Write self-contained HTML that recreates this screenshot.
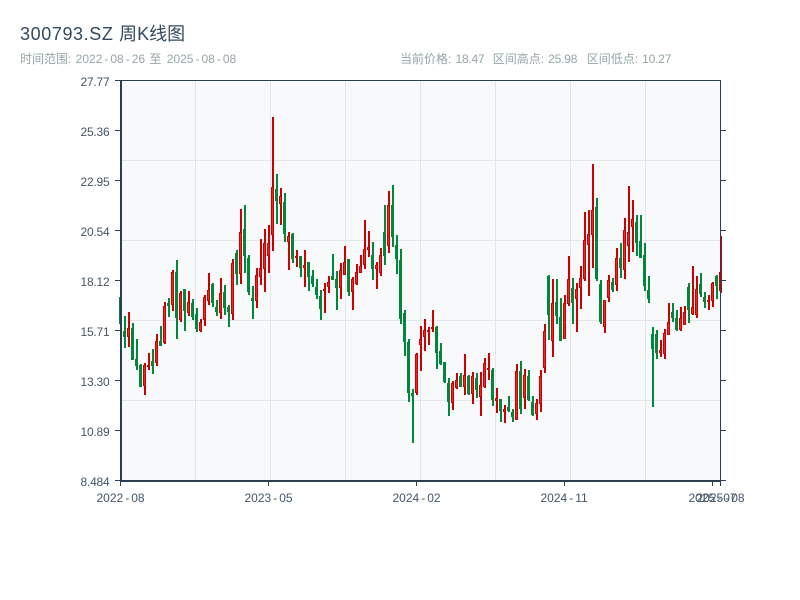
<!DOCTYPE html>
<html><head><meta charset="utf-8"><title>300793.SZ 周K线图</title>
<style>
html,body{margin:0;padding:0;background:#fff;width:800px;height:600px;overflow:hidden}
svg{display:block}
text{font-family:"Liberation Sans","Noto Sans CJK SC",sans-serif}
.y{font-size:12px;fill:#44566a;text-anchor:end;letter-spacing:-.2px}
.x{font-size:12px;fill:#44566a}
.s{font-size:12px;fill:#95a5a6}
</style></head><body>
<svg width="800" height="600" viewBox="0 0 800 600" xmlns="http://www.w3.org/2000/svg">
<rect width="800" height="600" fill="#fff"/>
<text x="20" y="40" font-size="18" fill="#34495e"><tspan letter-spacing=".6">300793.SZ </tspan>周K线图</text>
<text class="s" x="20" y="63">时间范围:<tspan dx="1"> 2022</tspan><tspan dx="2">-</tspan><tspan dx="2">08</tspan><tspan dx="2">-</tspan><tspan dx="2">26</tspan><tspan dx="1"> 至 </tspan><tspan dx="2">2025</tspan><tspan dx="2">-</tspan><tspan dx="2">08</tspan><tspan dx="2">-</tspan><tspan dx="2">08</tspan></text>
<text class="s" x="400" y="63">当前价格:<tspan dx="1" letter-spacing="-.2"> 18.47</tspan></text>
<text class="s" x="492.7" y="63">区间高点:<tspan dx="1" letter-spacing="-.2"> 25.98</tspan></text>
<text class="s" x="586.7" y="63">区间低点:<tspan dx="1" letter-spacing="-.2"> 10.27</tspan></text>
<rect x="121" y="81" width="600" height="400" fill="#f8f9fa"/>
<g shape-rendering="crispEdges">
<path d="M195 81V481M270 81V481M345 81V481M420 81V481M495 81V481M570 81V481M645 81V481M121 160H720M121 240H720M121 320H720M121 400H720" stroke="#e2e5ea" stroke-width="1" fill="none" transform="translate(.5 .5)"/>
<!-- green wicks -->
<path fill="none" stroke="#00873c" stroke-width="2" d="M121 297V324M125 316V348M133 323V360M137 339V370M141 364V387M153 349V374M161 326V346M169 298V317M177 260V339M185 289V331M193 299V320M197 308V332M213 283V307M217 300V316M225 285V315M229 305V327M237 250V285M245 205V273M249 255V295M253 286V319M277 174V224M285 193V242M293 233V263M301 256V277M309 262V291M313 270V287M317 279V299M321 290V320M333 254V280M337 271V310M349 259V296M373 242V280M385 205V265M393 185V247M397 235V274M401 249V324M405 310V356M409 339V402M413 389V443M437 326V369M441 343V365M445 362V383M449 378V416M461 373V387M469 375V395M477 373V398M493 368V406M501 399V422M509 396V412M513 409V422M521 361V414M529 370V401M533 396V416M549 275V340M557 279V324M561 298V341M573 278V324M597 198V281M601 280V324M613 278V292M621 243V278M637 215V256M641 215V258M645 243V291M649 276V303M653 327V407M657 330V359M673 303V322M677 310V331M689 283V323M701 273V297M705 292V308M717 275V299"/>
<!-- green bodies -->
<path fill="none" stroke="#00873c" stroke-width="3" d="M120.5 297V324M124.5 331V337M132.5 328V360M136.5 359V366M140.5 365V387M152.5 361V366M160.5 341V346M168.5 303V306M176.5 272V318M184.5 289V311M192.5 303V317M196.5 314V329M212.5 284V303M216.5 307V312M224.5 292V308M228.5 307V312M236.5 253V274M244.5 229V256M248.5 258V292M252.5 298V301M276.5 189V201M284.5 202V234M292.5 234V259M300.5 256V268M308.5 262V277M312.5 276V284M316.5 287V295M320.5 296V309M332.5 276V280M336.5 279V288M348.5 259V292M372.5 255V269M384.5 232V256M392.5 205V237M396.5 245V259M400.5 260V319M404.5 313V342M408.5 342V393M412.5 393V396M436.5 327V353M440.5 351V364M444.5 362V382M448.5 383V402M460.5 376V387M468.5 376V394M476.5 378V390M492.5 370V400M500.5 399V411M508.5 407V411M512.5 412V417M520.5 371V409M528.5 376V400M532.5 402V415M548.5 276V315M556.5 302V316M560.5 317V341M572.5 288V303M596.5 207V279M600.5 284V322M612.5 282V290M620.5 258V268M636.5 222V243M640.5 241V258M644.5 255V286M648.5 290V299M652.5 334V349M656.5 334V353M672.5 312V318M676.5 318V330M688.5 287V310M700.5 284V294M704.5 297V302M716.5 276V286"/>
<!-- red wicks -->
<path fill="none" stroke="#cc0000" stroke-width="2" d="M129 312V347M145 363V395M149 353V370M157 334V366M165 302V344M173 270V311M181 291V322M189 291V316M201 319V332M205 295V326M209 273V305M221 278V319M233 259V320M241 209V284M257 268V308M261 239V285M265 229V292M269 225V273M273 117V251M281 188V225M289 232V270M297 250V267M305 250V287M325 283V313M329 276V293M341 263V299M345 246V275M353 277V310M357 264V285M361 255V273M365 220V269M369 231V257M377 262V289M381 248V276M389 191V253M417 353V395M421 326V371M425 319V351M429 327V345M433 310V332M453 381V410M457 373V389M465 354V395M473 372V404M481 372V416M485 358V388M489 353V380M497 388V413M505 405V423M517 364V420M525 369V409M537 399V420M541 370V412M545 324V373M553 279V357M565 295V339M569 256V306M577 283V332M581 266V309M585 212V281M589 210V296M593 164V268M605 300V333M609 275V302M617 248V291M625 218V279M629 186V262M633 200V252M661 340V357M665 329V359M669 303V335M681 307V331M685 306V325M693 266V315M697 276V318M709 295V310M713 282V307M721 236V293"/>
<!-- red bodies -->
<path fill="none" stroke="#cc0000" stroke-width="3" d="M128.5 328V337M144.5 365V386M148.5 365V367M156.5 341V363M164.5 306V343M172.5 272V305M180.5 293V320M188.5 302V313M200.5 322V331M204.5 297V320M208.5 290V301M220.5 293V313M232.5 263V314M240.5 232V274M256.5 275V301M260.5 268V277M264.5 243V269M268.5 243V256M272.5 187V235M280.5 196V204M288.5 236V242M296.5 256V258M304.5 265V268M324.5 289V291M328.5 282V287M340.5 270V288M344.5 262V275M352.5 279V292M356.5 272V284M360.5 266V273M364.5 249V265M368.5 247V250M376.5 265V269M380.5 255V273M388.5 205V246M416.5 354V393M420.5 339V345M424.5 330V337M428.5 330V332M432.5 327V329M452.5 383V403M456.5 380V388M464.5 375V387M472.5 376V394M480.5 385V397M484.5 363V387M488.5 368V370M496.5 398V401M504.5 409V412M516.5 371V420M524.5 375V398M536.5 403V414M540.5 376V404M544.5 331V368M552.5 303V341M564.5 303V339M568.5 279V304M576.5 289V299M580.5 278V288M584.5 240V279M588.5 234V245M592.5 210V235M604.5 300V327M608.5 280V298M616.5 258V285M624.5 230V270M628.5 232V246M632.5 219V227M660.5 350V353M664.5 333V354M668.5 322V335M680.5 318V330M684.5 312V325M692.5 307V314M696.5 289V315M708.5 300V302M712.5 283V301M720.5 272V291"/>
<!-- red body highlight -->
<path fill="none" stroke="#f02626" stroke-width="1" d="M128.5 329V336M144.5 366V385M156.5 342V362M164.5 307V342M172.5 273V304M180.5 294V319M188.5 303V312M200.5 323V330M204.5 298V319M208.5 291V300M220.5 294V312M232.5 264V313M240.5 233V273M256.5 276V300M260.5 269V276M264.5 244V268M268.5 244V255M272.5 188V234M280.5 197V203M288.5 237V241M304.5 266V267M328.5 283V286M340.5 271V287M344.5 263V274M352.5 280V291M356.5 273V283M360.5 267V272M364.5 250V264M368.5 248V249M376.5 266V268M380.5 256V272M388.5 206V245M416.5 355V392M420.5 340V344M424.5 331V336M432.5 328V328M452.5 384V402M456.5 381V387M464.5 376V386M472.5 377V393M480.5 386V396M484.5 364V386M496.5 399V400M504.5 410V411M516.5 372V419M524.5 376V397M536.5 404V413M540.5 377V403M544.5 332V367M552.5 304V340M564.5 304V338M568.5 280V303M576.5 290V298M580.5 279V287M584.5 241V278M588.5 235V244M592.5 211V234M604.5 301V326M608.5 281V297M616.5 259V284M624.5 231V269M628.5 233V245M632.5 220V226M660.5 351V352M664.5 334V353M668.5 323V334M680.5 319V329M684.5 313V324M692.5 308V313M696.5 290V314M712.5 284V300M720.5 273V290"/>
<!-- axes -->
<g fill="#2c3e50">
<rect x="120" y="80" width="601" height="1"/>
<rect x="720" y="80" width="1" height="402"/>
<rect x="120" y="80" width="2" height="402"/>
<rect x="120" y="480" width="601" height="2"/>
<rect x="115" y="80" width="5" height="1"/><rect x="115" y="130" width="5" height="1"/><rect x="115" y="180" width="5" height="1"/><rect x="115" y="230" width="5" height="1"/><rect x="115" y="280" width="5" height="1"/><rect x="115" y="330" width="5" height="1"/><rect x="115" y="380" width="5" height="1"/><rect x="115" y="430" width="5" height="1"/><rect x="115" y="480" width="5" height="1"/>
<rect x="721" y="130" width="5" height="1"/><rect x="721" y="180" width="5" height="1"/><rect x="721" y="230" width="5" height="1"/><rect x="721" y="280" width="5" height="1"/><rect x="721" y="330" width="5" height="1"/><rect x="721" y="380" width="5" height="1"/><rect x="721" y="430" width="5" height="1"/><rect x="721" y="480" width="5" height="1"/>
<rect x="120" y="482" width="1" height="4"/><rect x="268" y="482" width="1" height="4"/><rect x="416" y="482" width="1" height="4"/><rect x="564" y="482" width="1" height="4"/><rect x="712" y="482" width="1" height="4"/><rect x="720" y="482" width="1" height="4"/>
</g>
</g>
<text class="y" x="109.5" y="86" letter-spacing="-.7">27.77</text>
<text class="y" x="109.5" y="136">25.36</text>
<text class="y" x="109.5" y="186">22.95</text>
<text class="y" x="109.5" y="236">20.54</text>
<text class="y" x="109.5" y="286">18.12</text>
<text class="y" x="109.5" y="336">15.71</text>
<text class="y" x="109.5" y="386">13.30</text>
<text class="y" x="109.5" y="436">10.89</text>
<text class="y" x="109.5" y="486">8.484</text>
<text class="x" x="96.5" y="502">2022<tspan dx="2">-</tspan><tspan dx="2">08</tspan></text>
<text class="x" x="244.5" y="502">2023<tspan dx="2">-</tspan><tspan dx="2">05</tspan></text>
<text class="x" x="392.5" y="502">2024<tspan dx="2">-</tspan><tspan dx="2">02</tspan></text>
<text class="x" x="540.5" y="502">2024<tspan dx="2">-</tspan><tspan dx="2">11</tspan></text>
<text class="x" x="688.5" y="502">2025<tspan dx="2">-</tspan><tspan dx="2">07</tspan></text>
<text class="x" x="696.5" y="502">2025<tspan dx="2">-</tspan><tspan dx="2">08</tspan></text>
</svg>
</body></html>
